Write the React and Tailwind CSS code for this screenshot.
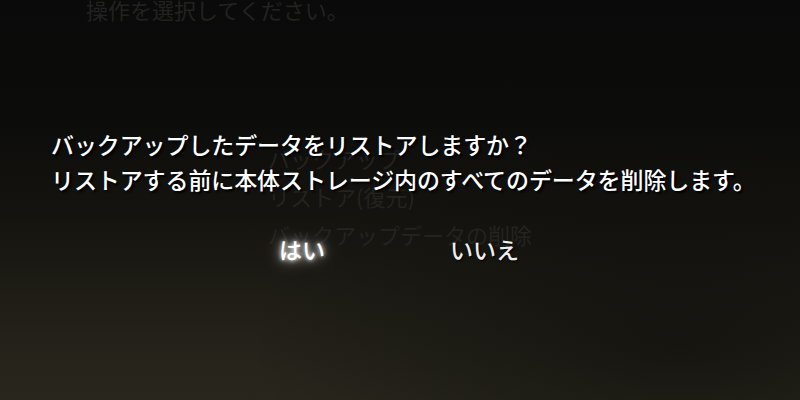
import React from "react";

const jp = { fontFamily: '"Noto Sans CJK JP", "Noto Sans", sans-serif' };

export default function App() {
  return (
    <div
      className="relative w-[800px] h-[400px] overflow-hidden bg-[linear-gradient(180deg,#0a0a0a_0%,#0c0c0b_30%,#15140f_55%,#1f1d16_75%,#29271d_100%)]"
      style={jp}
    >
      {/* dim menu behind the dialog */}
      <div className="absolute inset-0 bg-[radial-gradient(ellipse_at_85%_85%,rgba(10,10,8,0.55),transparent_45%)]" />
      <div className="absolute inset-0 text-[#222221]">
        <div className="pl-[86px] text-[22px] leading-[22px] -mt-[2px]">操作を選択してください。</div>
        <div className="pl-[268px] mt-[125px] flex flex-col gap-[12px] text-[22px] leading-[26px] text-[#242320]">
          <span>バックアップ</span>
          <span>リストア(復元)</span>
          <span>バックアップデータの削除</span>
        </div>
      </div>

      {/* dialog */}
      <div className="relative flex flex-col pl-[51px] pt-[127px]">
        <p className="text-[23px] leading-[35px] font-medium text-white tracking-[-0.1px] [text-shadow:2px_2px_2px_#000]">
          バックアップしたデータをリストアしますか？
          <br />
          リストアする前に本体ストレージ内のすべてのデータを削除します。
        </p>
        <div className="flex mt-[38px] text-[23px] leading-[28px] font-medium">
          <span className="ml-[228px] w-[171px] text-white [text-shadow:0_0_4px_#fff,0_0_10px_rgba(255,255,255,0.8),0_0_18px_rgba(255,255,255,0.5)]">
            はい
          </span>
          <span className="text-[#eeeeee] [text-shadow:1px_1px_2px_#000]">いいえ</span>
        </div>
      </div>
    </div>
  );
}
